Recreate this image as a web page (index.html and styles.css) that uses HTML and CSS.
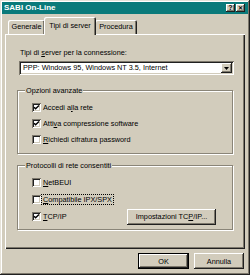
FILE: index.html
```html
<!DOCTYPE html>
<html lang="it">
<head>
<meta charset="utf-8">
<link rel="stylesheet" href="styles.css">
</head>
<body>
<div class="window">
  <div class="titlebar">
    <span class="title">SABI On-Line</span>
    <div class="tbtns">
      <span class="tbtn">?</span>
      <span class="tbtn x">&#x2715;</span>
    </div>
  </div>
  <div class="tabs">
    <div class="tab t1">Generale</div>
    <div class="tab sel">Tipi di server</div>
    <div class="tab t3">Procedura</div>
  </div>
  <div class="panel">
    <div class="lbl">Tipi di <u>s</u>erver per la connessione:</div>
    <div class="combo">
      <span class="combo-text">PPP: Windows 95, Windows NT 3.5, Internet</span>
      <span class="combo-btn"><svg width="5" height="3" viewBox="0 0 5 3"><path d="M0 0H5L2.5 3Z" fill="#000"/></svg></span>
    </div>
    <div class="group g1">
      <span class="legend">Opzioni avanzate</span>
      <div class="row"><span class="cb"><svg viewBox="0 0 9 9" width="9" height="9"><path d="M2 4.2L3.6 5.8L7 2.4" fill="none" stroke="#000" stroke-width="1.4"/></svg></span><span>Accedi a<u>l</u>la rete</span></div>
      <div class="row"><span class="cb"><svg viewBox="0 0 9 9" width="9" height="9"><path d="M2 4.2L3.6 5.8L7 2.4" fill="none" stroke="#000" stroke-width="1.4"/></svg></span><span>Atti<u>v</u>a compressione software</span></div>
      <div class="row"><span class="cb"></span><span><u>R</u>ichiedi cifratura password</span></div>
    </div>
    <div class="group g2">
      <span class="legend">Protocolli di rete consentiti</span>
      <div class="row r2"><span class="cb"></span><span><u>N</u>etBEUI</span></div>
      <div class="row r2"><span class="cb"></span><span class="focus"><u>C</u>ompatibile IPX/SPX</span></div>
      <div class="row r2"><span class="cb"><svg viewBox="0 0 9 9" width="9" height="9"><path d="M2 4.2L3.6 5.8L7 2.4" fill="none" stroke="#000" stroke-width="1.4"/></svg></span><span><u>T</u>CP/IP</span><span class="btn tcp">Impostazioni TC<u>P</u>/IP...</span></div>
    </div>
  </div>
  <div class="footer">
    <span class="btn def">OK</span>
    <span class="btn">Annulla</span>
  </div>
</div>
</body>
</html>
```
FILE: styles.css
```css
* { box-sizing: border-box; }
html, body { margin: 0; padding: 0; }
body {
  width: 250px;
  height: 275px;
  overflow: hidden;
  background: #d2ccbc;
  font-family: "Liberation Sans", Arial, sans-serif;
  font-size: 7.3px;
  color: #000;
}
u { text-decoration: underline; text-underline-offset: 1px; }
.window {
  width: 250px;
  height: 275px;
  padding: 2px;
  background: #d2ccbc;
  box-shadow: inset -1px -1px 0 #202020, inset 1px 1px 0 #e6e2d8, inset -2px -2px 0 #7d786c, inset 2px 2px 0 #fff;
  display: flex;
  flex-direction: column;
}
.titlebar {
  height: 12px;
  background: #0a7a7a;
  display: flex;
  align-items: center;
  justify-content: space-between;
  padding: 0 3px 0 2px;
}
.title {
  color: #fff;
  font-weight: bold;
  font-size: 8px;
  line-height: 10px;
}
.tbtns { display: flex; gap: 1px; }
.tbtn {
  width: 9px;
  height: 8px;
  background: #d2ccbc;
  box-shadow: inset -1px -1px 0 #202020, inset 1px 1px 0 #fff, inset -2px -2px 0 #7d786c;
  font-weight: bold;
  font-size: 7px;
  line-height: 8px;
  text-align: center;
  color: #000;
}
.tbtn.x { font-size: 6px; }
.tabs {
  display: flex;
  align-items: flex-end;
  height: 20px;
  margin-left: 3px;
  padding-left: 3px;
  position: relative;
  z-index: 2;
}
.tab {
  height: 14px;
  line-height: 13px;
  text-align: center;
  box-shadow: inset 1px 1px 0 #fff, inset -1px 0 0 #202020, inset -2px 0 0 #7d786c;
  border-radius: 2px 2px 0 0;
  background: #d2ccbc;
}
.t1 { width: 37px; }
.sel {
  width: 52px;
  height: 18px;
  line-height: 17px;
  margin: 0 -1px -1px -1px;
  box-shadow: inset 1px 1px 0 #fff, inset -1px 0 0 #202020, inset -2px 0 0 #7d786c;
  position: relative;
  z-index: 3;
}
.t3 { width: 42px; }
.panel {
  width: 240px;
  height: 215px;
  margin-left: 3px;
  padding: 14px 12px 0 12px;
  background: #d2ccbc;
  box-shadow: inset 1px 1px 0 #fff, inset -1px -1px 0 #202020, inset -2px -2px 0 #7d786c;
  display: flex;
  flex-direction: column;
}
.lbl {
  line-height: 9px;
  margin-left: 3px;
}
.combo {
  margin: 4px 0 0 2px;
  width: 215px;
  height: 14px;
  background: #fff;
  box-shadow: inset 1px 1px 0 #7d786c, inset -1px -1px 0 #fff, inset 2px 2px 0 #202020, inset -2px -2px 0 #d2ccbc;
  display: flex;
  align-items: center;
  padding: 2px;
}
.combo-text { flex: 1; padding-left: 2px; line-height: 10px; }
.combo-btn {
  width: 11px;
  height: 10px;
  background: #d2ccbc;
  box-shadow: inset -1px -1px 0 #202020, inset 1px 1px 0 #fff, inset -2px -2px 0 #7d786c;
  display: flex;
  align-items: center;
  justify-content: center;
}
.group {
  position: relative;
  width: 216px;
  border: 1px solid #8a8578;
  box-shadow: inset 1px 1px 0 #fff, 1px 1px 0 #fff;
  padding: 8px 0 0 14px;
}
.g1 { margin-top: 15px; height: 64px; }
.g2 { margin-top: 11px; height: 65px; }
.legend {
  position: absolute;
  top: -5px;
  left: 7px;
  padding: 0 1px;
  line-height: 9px;
  background: #d2ccbc;
}
.row {
  display: flex;
  align-items: center;
  height: 16px;
}
.r2 { height: 17px; }
.cb {
  width: 9px;
  height: 9px;
  margin-right: 2px;
  background: #fff;
  box-shadow: inset 1px 1px 0 #7d786c, inset -1px -1px 0 #fff, inset 2px 2px 0 #202020, inset -2px -2px 0 #d2ccbc;
  display: flex;
}
.focus {
  outline: 1px dotted #000;
  outline-offset: 0;
  line-height: 9px;
  padding: 0 1px;
  margin-left: -1px;
}
.btn {
  display: flex;
  align-items: center;
  justify-content: center;
  height: 16px;
  width: 50px;
  background: #d2ccbc;
  box-shadow: inset -1px -1px 0 #202020, inset 1px 1px 0 #fff, inset -2px -2px 0 #7d786c;
}
.tcp {
  width: 89px;
  margin-left: auto;
  margin-right: 16px;
}
.footer {
  display: flex;
  justify-content: flex-end;
  gap: 5px;
  margin-top: 4px;
  padding-right: 4px;
}
.def {
  width: 51px;
  border: 1px solid #000;
  box-shadow: inset -1px -1px 0 #202020, inset 1px 1px 0 #fff, inset -2px -2px 0 #7d786c;
}
```
